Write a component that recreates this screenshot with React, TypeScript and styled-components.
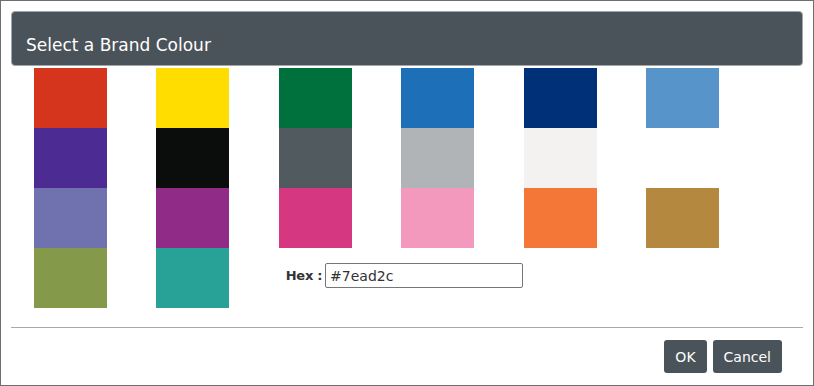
import styled, { createGlobalStyle } from "styled-components";

const GlobalStyle = createGlobalStyle`
  html, body {
    margin: 0;
    padding: 0;
    background: #ffffff;
  }
  body {
    font-family: "DejaVu Sans", Verdana, sans-serif;
  }
`;

const colors = {
  dark: "#4b535a",
  white: "#ffffff",
};

const swatches: (string | null)[] = [
  "#d4351c", "#ffdd00", "#00703c", "#1d70b8", "#003078", "#5694ca",
  "#4c2c92", "#0b0c0c", "#505a5f", "#b1b4b6", "#f3f2f1", null,
  "#6f72af", "#912b88", "#d53880", "#f499be", "#f47738", "#b58840",
  "#85994b", "#28a197",
];

const Dialog = styled.div`
  width: 814px;
  height: 386px;
  box-sizing: border-box;
  border: 1px solid #6e6e6e;
  padding: 10px 10px 0 10px;
  display: flex;
  flex-direction: column;
  background: ${colors.white};
`;

const Header = styled.div`
  height: 55px;
  box-sizing: border-box;
  background: ${colors.dark};
  border: 1px solid #a3a6a9;
  border-radius: 4px;
  display: flex;
  align-items: flex-end;
  padding: 0 0 10px 14px;
`;

const Title = styled.h1`
  margin: 0;
  font-size: 17px;
  font-weight: normal;
  color: ${colors.white};
  line-height: 20px;
`;

const Grid = styled.div`
  display: grid;
  grid-template-columns: repeat(6, 122.4px);
  grid-auto-rows: 60px;
  margin: 2px 0 0 23px;
`;

const Swatch = styled.div<{ $color: string }>`
  width: 73px;
  height: 60px;
  background: ${(p) => p.$color};
  cursor: pointer;
`;

const HexField = styled.div`
  grid-column: 3 / span 4;
  display: flex;
  align-items: center;
  padding-left: 7px;
  gap: 3px;
  margin-top: -5px;
`;

const HexLabel = styled.label`
  font-size: 13px;
  font-weight: bold;
  color: #333333;
  letter-spacing: -0.3px;
`;

const HexInput = styled.input`
  width: 198px;
  height: 25px;
  box-sizing: border-box;
  border: 1px solid #767676;
  border-radius: 2px;
  padding: 0 4px;
  font-family: "DejaVu Sans", Verdana, sans-serif;
  font-size: 14px;
  color: #333333;
  outline: none;
`;

const Divider = styled.hr`
  margin: 19px 0 0 0;
  border: none;
  border-top: 1px solid #aaaaaa;
  height: 0;
`;

const Footer = styled.div`
  display: flex;
  justify-content: flex-end;
  gap: 6px;
  padding: 12px 21px 0 0;
`;

const Btn = styled.button`
  height: 33px;
  box-sizing: border-box;
  padding: 0 11px;
  border: none;
  border-radius: 3px;
  background: ${colors.dark};
  color: ${colors.white};
  font-family: "DejaVu Sans", Verdana, sans-serif;
  font-size: 14px;
  cursor: pointer;
`;

function App() {
  return (
    <>
      <GlobalStyle />
      <Dialog>
        <Header>
          <Title>Select a Brand Colour</Title>
        </Header>
        <Grid>
          {swatches.map((c, i) =>
            c ? <Swatch key={i} $color={c} /> : <div key={i} />
          )}
          <HexField>
            <HexLabel htmlFor="hex">Hex :</HexLabel>
            <HexInput id="hex" defaultValue="#7ead2c" />
          </HexField>
        </Grid>
        <Divider />
        <Footer>
          <Btn>OK</Btn>
          <Btn>Cancel</Btn>
        </Footer>
      </Dialog>
    </>
  );
}

export default App;
